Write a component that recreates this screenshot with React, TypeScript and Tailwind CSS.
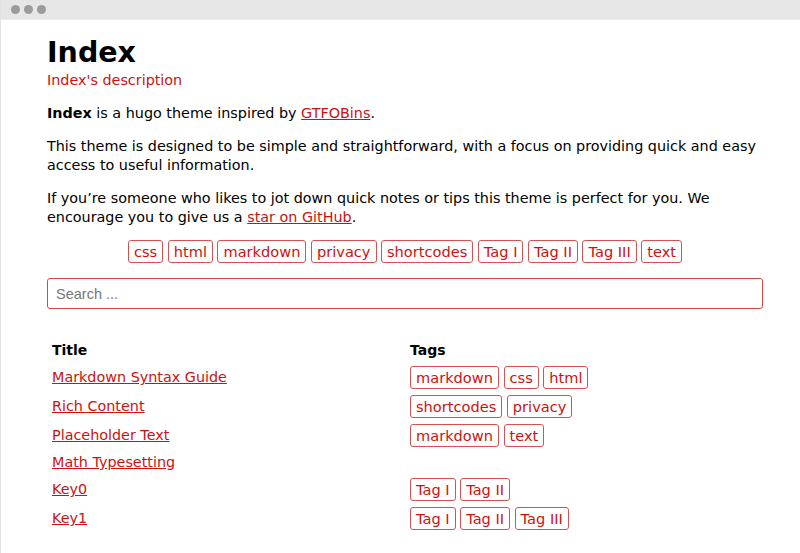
import React from "react";

const topTags = ["css", "html", "markdown", "privacy", "shortcodes", "Tag I", "Tag II", "Tag III", "text"];

const rows: { title: string; tags: string[] }[] = [
  { title: "Markdown Syntax Guide", tags: ["markdown", "css", "html"] },
  { title: "Rich Content", tags: ["shortcodes", "privacy"] },
  { title: "Placeholder Text", tags: ["markdown", "text"] },
  { title: "Math Typesetting", tags: [] },
  { title: "Key0", tags: ["Tag I", "Tag II"] },
  { title: "Key1", tags: ["Tag I", "Tag II", "Tag III"] },
];

function Tag({ name }: { name: string }) {
  return (
    <a className="inline-block border border-[#d65252] rounded-[3px] px-[5px] py-[2px] text-[14.6px] leading-[17px] text-[#cc1111] whitespace-nowrap">
      {name}
    </a>
  );
}

export default function App() {
  return (
    <div className="w-[800px] h-[553px] bg-white overflow-hidden border-l border-[#e3e3e3] text-black" style={{ fontFamily: '"DejaVu Sans", Verdana, sans-serif' }}>
      <div className="h-[20px] bg-[#e6e6e6] flex items-center pl-[10px] gap-[4px] border-b border-[#ececec]">
        <span className="w-[9px] h-[9px] rounded-full bg-[#9b9b9b]" />
        <span className="w-[9px] h-[9px] rounded-full bg-[#9b9b9b]" />
        <span className="w-[9px] h-[9px] rounded-full bg-[#9b9b9b]" />
      </div>
      <div className="ml-[46px] w-[716px] text-[14.35px] leading-[19px]">
        <h1 className="mt-[16px] text-[28.5px] leading-[33px] font-bold">Index</h1>
        <div className="mt-[2px] text-[#cc1111]">Index's description</div>
        <p className="mt-[14px]">
          <strong className="font-bold">Index</strong> is a hugo theme inspired by{" "}
          <a className="text-[#cc1111] underline">GTFOBins</a>.
        </p>
        <p className="mt-[14px]">
          This theme is designed to be simple and straightforward, with a focus on providing quick and easy access to useful information.
        </p>
        <p className="mt-[14px]">
          If you’re someone who likes to jot down quick notes or tips this theme is perfect for you. We encourage you to give us a{" "}
          <a className="text-[#cc1111] underline">star on GitHub</a>.
        </p>
        <div className="mt-[13px] flex flex-wrap justify-center gap-[4.5px]">
          {topTags.map((t) => (
            <Tag key={t} name={t} />
          ))}
        </div>
        <input
          type="text"
          placeholder="Search ..."
          className="mt-[15px] block w-full h-[31px] border border-[#d64848] rounded-[3px] px-[8px] text-[14.5px] outline-none placeholder:text-[#777]"
          style={{ fontFamily: '"Liberation Sans", Arial, sans-serif' }}
        />
        <table className="mt-[29px] w-full table-fixed border-collapse">
          <thead>
            <tr>
              <th className="w-1/2 text-left font-bold px-[5px] py-[3px] align-middle text-[14px]">Title</th>
              <th className="w-1/2 text-left font-bold px-[5px] py-[3px] align-middle text-[14px]">Tags</th>
            </tr>
          </thead>
          <tbody>
            {rows.map((r) => (
              <tr key={r.title}>
                <td className="px-[5px] py-[3px] align-middle">
                  <a className="text-[#cc1111] underline">{r.title}</a>
                </td>
                <td className="px-[5px] py-[3px] align-middle">
                  {r.tags.length > 0 && (
                    <div className="flex gap-[4.5px]">
                      {r.tags.map((t) => (
                        <Tag key={t} name={t} />
                      ))}
                    </div>
                  )}
                </td>
              </tr>
            ))}
          </tbody>
        </table>
      </div>
    </div>
  );
}
